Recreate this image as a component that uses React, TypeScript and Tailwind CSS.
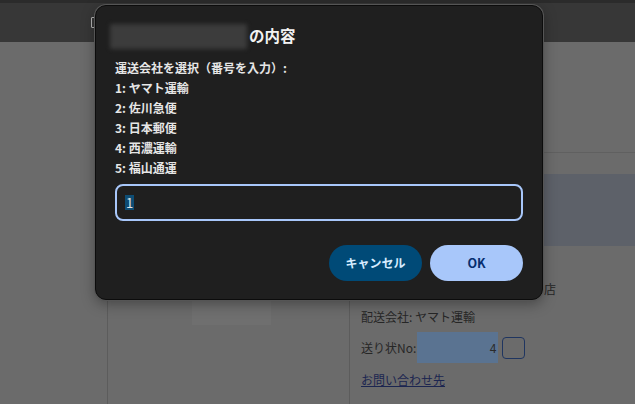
import React from "react";

const jp = { fontFamily: '"Noto Sans CJK JP", "Noto Sans", sans-serif' };

export default function App() {
  return (
    <div className="relative w-[635px] h-[404px] overflow-hidden bg-[#6b6b6b]" style={jp}>
      {/* dimmed page behind */}
      <div className="flex flex-col h-full">
        <div className="h-[42px] shrink-0 bg-[#373737] border-t-[3px] border-[#2b2b2b] flex items-start pl-[91px] pt-[14px]">
          <div className="w-[10px] h-[11px] border border-[#b5b5b5] rounded-[1px]" />
        </div>
        <div className="flex flex-1">
          <div className="w-[108px] shrink-0 border-r border-[#5c5c5c]" />
          <div className="w-[242px] shrink-0 border-r border-[#5c5c5c] pl-[84px] pt-[216px]">
            <div className="w-[79px] h-[67px] bg-[#6f6f6f]" />
          </div>
          <div className="flex-1 flex flex-col">
            <div className="h-[111px] border-b border-[#606060]" />
            <div className="h-[21px]" />
            <div className="h-[72px] bg-[#5d6169]" />
            <div className="pl-[11px] text-[12px] leading-[20px] text-[#262626] flex flex-col">
              <div className="h-[53px] flex items-end">
                <div className="flex">
                  <span className="w-[183px] overflow-hidden whitespace-nowrap">購入店舗: サンプル商事 本</span>
                  <span>店</span>
                </div>
              </div>
              <div className="mt-[8px]">配送会社: ヤマト運輸</div>
              <div className="mt-[5px] flex items-center">
                <span>送り状No:</span>
                <span className="ml-[1px] w-[81px] h-[31px] bg-[#5a7391] flex items-center justify-end pr-[2px] text-[#2a2a2a]">
                  4
                </span>
                <span className="ml-[4px] w-[23px] h-[22px] border-[1.5px] border-[#1f3560] rounded-[4px]" />
              </div>
              <div className="mt-[7px]">
                <span className="underline text-[#1b2550]">お問い合わせ先</span>
              </div>
            </div>
          </div>
        </div>
      </div>

      {/* dialog */}
      <div className="absolute left-[95px] top-[5px] w-[448px] h-[295px] bg-[#1f1f1f] border border-[#0c0c0c] rounded-[11px] shadow-[0_0_0_1px_#555555,0_4px_14px_rgba(0,0,0,0.35)] px-[19px] pt-[17px]">
        <div className="flex items-center h-[26px]">
          <div className="w-[137px] h-[25px] bg-[#3c3c3c] blur-[2px] rounded-[2px] -ml-[5px]" />
          <span className="ml-[2px] text-[15.5px] font-bold text-[#f2f2f2]">の内容</span>
        </div>
        <div className="mt-[9px] text-[12px] leading-[20px] font-bold text-[#e6e6e6]">
          <div>運送会社を選択（番号を入力）:</div>
          <div>1: ヤマト運輸</div>
          <div>2: 佐川急便</div>
          <div>3: 日本郵便</div>
          <div>4: 西濃運輸</div>
          <div>5: 福山通運</div>
        </div>
        <div className="mt-[6px] h-[37px] border-2 border-[#a8c7fa] rounded-[8px] flex items-center pl-[8px]">
          <span className="bg-[#0e4d74] text-[#e3e3e3] text-[13px] leading-[15px] px-[1px]">1</span>
        </div>
        <div className="mt-[24px] flex justify-end gap-[8px]">
          <button className="w-[93px] h-[36px] rounded-full bg-[#004a77] text-[#d6ecff] text-[12px] font-bold">
            キャンセル
          </button>
          <button className="w-[93px] h-[36px] rounded-full bg-[#a8c7fa] text-[#062e6f] text-[12.5px] font-bold">
            OK
          </button>
        </div>
      </div>
    </div>
  );
}
